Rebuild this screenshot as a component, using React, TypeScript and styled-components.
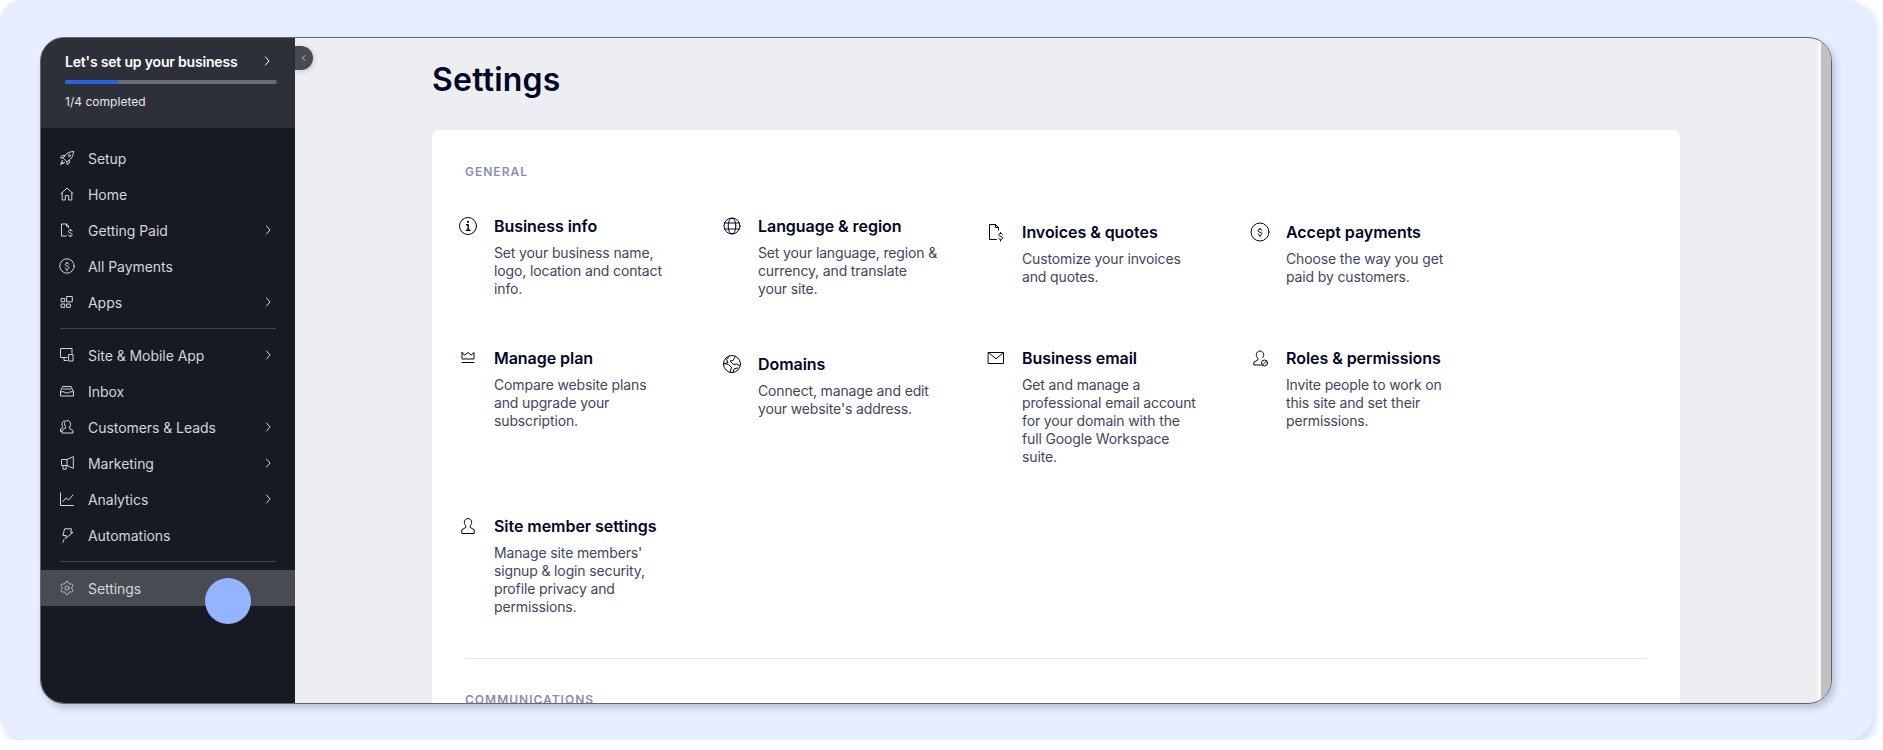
import React from "react";
import styled, { createGlobalStyle } from "styled-components";
import { Settings as Gear } from "lucide-react";

const Global = createGlobalStyle`
  html, body { margin: 0; padding: 0; background: #fff; overflow: hidden; }
  body { font-family: "Inter", "Liberation Sans", sans-serif; }
  * { box-sizing: border-box; }
`;

const Backdrop = styled.div`
  width: 1873px;
  height: 740px;
  padding: 37px 0 0 40px;
  background: #e7eeff;
  border-radius: 22px 26px 26px 26px;
  box-shadow: 3px 4px 8px #cfdcff;
`;

const Window = styled.div`
  position: relative;
  display: flex;
  width: 1792px;
  height: 667px;
  overflow: hidden;
  background: #edeef2;
  border: 1px solid #66676b;
  border-radius: 24px;
`;

const WindowShadow = styled.div`
  width: 1792px;
  height: 667px;
  border-radius: 24px;
  box-shadow: 3px 4px 7px rgba(40, 50, 80, 0.24);
`;

const Sidebar = styled.aside`
  flex: 0 0 254px;
  display: flex;
  flex-direction: column;
  background: #161a23;
  color: #d4d5d9;
`;

const SetupCard = styled.div`
  height: 90px;
  padding: 13px 18px 0 24px;
  background: #2d3038;
`;

const SetupTop = styled.div`
  display: flex;
  align-items: center;
  justify-content: space-between;
  height: 20px;
  padding-right: 5px;
  color: #fff;
  font-size: 14px;
  font-weight: 600;
  letter-spacing: -0.18px;
`;

const Track = styled.div`
  height: 4px;
  margin-top: 9px;
  border-radius: 2px;
  background: #6b6c72;
  overflow: hidden;
`;

const Fill = styled.div`
  width: 25%;
  height: 100%;
  background: #2a63e0;
`;

const Progress = styled.div`
  margin-top: 10px;
  color: #e6e7ea;
  font-size: 12px;
  line-height: 16px;
  letter-spacing: 0.03px;
`;

const Nav = styled.nav`
  display: flex;
  flex-direction: column;
  padding-top: 12px;
`;

const NavRow = styled.div<{ $active?: boolean }>`
  display: flex;
  align-items: center;
  height: 36px;
  padding: 0 22px 0 16px;
  background: ${(p) => (p.$active ? "#484b52" : "transparent")};
  font-size: 14px;
  letter-spacing: -0.05px;
`;

const NavIcon = styled.span`
  display: flex;
  align-items: center;
  justify-content: center;
  width: 20px;
  height: 20px;
  margin-right: 11px;
`;

const NavLabel = styled.span`
  flex: 1;
`;

const NavDivider = styled.div`
  height: 1px;
  margin: 8px 19px;
  background: #43454c;
`;

const Tap = styled.div`
  position: absolute;
  left: 164px;
  top: 540px;
  width: 46px;
  height: 46px;
  border-radius: 50%;
  background: #94b4ff;
`;

const Collapse = styled.div`
  position: absolute;
  left: 254px;
  top: 8px;
  display: flex;
  align-items: center;
  justify-content: center;
  width: 18px;
  height: 24px;
  border-radius: 0 12px 12px 0;
  background: #474a52;
  color: #c4c5ca;
  box-shadow: 1px 1px 5px rgba(0, 0, 0, 0.18);
`;

const Main = styled.main`
  flex: 1;
  min-width: 0;
  height: 100%;
  overflow: hidden;
  padding: 22px 137px 0 137px;
`;

const Title = styled.h1`
  margin: 0 0 30px;
  height: 40px;
  color: #000624;
  font-size: 32px;
  line-height: 40px;
  font-weight: 600;
  letter-spacing: 0.2px;
`;

const Card = styled.section`
  height: 700px;
  padding: 34px 33px 0 24px;
  background: #fff;
  border-radius: 8px;
`;

const SectionLabel = styled.div`
  margin-left: 9px;
  color: #8b8ea9;
  font-size: 12px;
  line-height: 16px;
  font-weight: 600;
  letter-spacing: 1px;
`;

const Grid = styled.div`
  display: grid;
  grid-template-columns: repeat(4, 264px);
  row-gap: 48px;
  margin-top: 34px;
`;

const Item = styled.div<{ $drop?: boolean }>`
  display: flex;
  gap: 14px;
  padding-top: ${(p) => (p.$drop ? "6px" : "0")};
`;

const ItemIcon = styled.span`
  flex: 0 0 24px;
  height: 24px;
  display: flex;
  align-items: center;
  justify-content: center;
  color: #000624;
`;

const ItemTitle = styled.div`
  color: #000624;
  font-size: 16px;
  line-height: 24px;
  font-weight: 600;
  letter-spacing: -0.05px;
`;

const ItemText = styled.div`
  margin-top: 6px;
  color: #42465c;
  font-size: 14px;
  line-height: 18px;
  letter-spacing: -0.14px;
  white-space: nowrap;
`;

const Divider = styled.div`
  height: 1px;
  margin: 42px 0 0 9px;
  background: #dfe5eb;
`;

const NextLabel = styled(SectionLabel)`
  margin-top: 33px;
`;

const Scrollbar = styled.div`
  flex: 0 0 14px;
  height: 100%;
  border-left: 4px solid #f7f7f7;
  background: #c1c1c1;
`;

const Svg = styled.svg`
  display: block;
  fill: none;
  stroke: currentColor;
  stroke-width: 1;
  stroke-linecap: round;
  stroke-linejoin: round;
`;

const dollar = (x: number, y: number, s = 1) =>
  `M${x + 1.9 * s} ${y - 1.6 * s}c-.4-.8-1-1.1-1.9-1.1-1 0-1.8.6-1.8 1.5 0 2.1 3.8 1 3.8 3.1 0 .9-.8 1.5-2 1.5-.9 0-1.6-.4-2-1.1M${x} ${y - 3.6 * s}v1M${x} ${y + 4 * s}v1.1`;

const nav: Record<string, React.ReactNode> = {
  rocket: (
    <>
      <path d="M16.5 3.5c-3.6.1-6.2 1.3-8.3 3.8L6.2 10l3.8 3.8 2.7-2c2.5-2.1 3.7-4.7 3.8-8.3z" />
      <path d="M7.8 7.6H5L3.5 10l2.7.1M12.4 12.2V15L10 16.5l-.1-2.7" />
      <circle cx="12.4" cy="7.6" r="1.1" />
      <path d="M5.6 12.4 3.5 16.5l4.1-2.1M4.6 13.8l1.6 1.6" />
    </>
  ),
  home: <path d="M4 9.6 10 4l6 5.6M5.2 8.6V16h3.1v-4.4h3.4V16h3.1V8.6" />,
  file: (
    <>
      <path d="M11.5 8V6.2L9.5 4H4.5v12h4.8M9.5 4v2.2h2" />
      <path d={dollar(13.6, 12.4, 0.8)} />
    </>
  ),
  coin: (
    <>
      <circle cx="10" cy="10" r="7.2" />
      <path d={dollar(10, 9.8)} />
    </>
  ),
  apps: (
    <>
      <rect x="4.5" y="6.5" width="3.3" height="3.3" />
      <rect x="10" y="4.5" width="5.3" height="5.3" />
      <rect x="4.5" y="12" width="3.3" height="3.3" />
      <rect x="10" y="12" width="3.3" height="3.3" />
    </>
  ),
  site: (
    <>
      <path d="M10 12.5H3.5v-9h11.5v4.5M7 12.5v3h3" />
      <rect x="12" y="9.5" width="4" height="6.5" />
    </>
  ),
  inbox: (
    <>
      <path d="M6 5.5h8l2.5 5v4.500h-13v-4.500z" />
      <path d="M3.5 10.800H7c.6 1.600 5.400 1.600 6 0h3.500M6 8h8" />
    </>
  ),
  people: (
    <>
      <path d="M10.500 3.500c-2 0-3.100 1.500-3 3.200 0 1.400.5 2.400 1.200 3v1.300L5 13.200v2.800h11v-2.500l-3.500-2v-1.400c.7-.7 1.100-1.700 1.100-3 0-1.500-1.100-3.600-3.100-3.600z" />
      <path d="M7.500 3.800C5 4 4.400 7.500 5.700 9.700v1L3.500 12v2.500H5" />
    </>
  ),
  megaphone: (
    <>
      <path d="M16 3.800 10 6.500H4.500v6H10l6 2.700z" />
      <path d="M6 12.500v3.700h3.200v-3.700M10 6.500v6" />
    </>
  ),
  chart: <path d="M3.500 3.800V16.500H16.500M5.800 12.800 9 8.800l2.500 2.200 4.500-5" />,
  bolt: <path d="M8 3.800h6.500l-.9 3.500h2.400L8.500 13.500l.8-3H6.300zM7 14.500l-1 2.800" />,
};

const big: Record<string, React.ReactNode> = {
  info: (
    <>
      <circle cx="12" cy="12" r="8.500" />
      <path strokeWidth="1.500" d="M10.500 10.800H12.200V16M10.300 16.200H14" />
      <path strokeWidth="2" d="M12 7.700v.3" />
    </>
  ),
  globe: (
    <>
      <circle cx="12" cy="12" r="8" />
      <ellipse cx="12" cy="12" rx="3.800" ry="8" />
      <path d="M4.700 9h14.600M4.700 15h14.600" />
    </>
  ),
  file: (
    <>
      <path d="M14.500 10V7.500L11.500 4.500H5.500v15h7M11.500 4.500v3h3" />
      <path d={dollar(16.500, 16, 1)} />
    </>
  ),
  coin: (
    <>
      <circle cx="12" cy="12" r="9" />
      <path d={dollar(12, 11.800, 0.95)} />
    </>
  ),
  crown: (
    <>
      <path d="M6 6.500v6.500h12V6.500l-2.800 2.500L12 6.500 8.800 9z" />
      <path d="M6 16.500h12" />
    </>
  ),
  earth: (
    <>
      <circle cx="12" cy="12" r="8.500" />
      <path d="M9 4.500 6.500 7.500l1.500 3-3 1M4 11.500l4.500 1 3 3-1.500 5M15.500 4.300 13 8.500l-3 .5 3.500 3.500 3-.5 3 1.500M13 20.300l1-3.300 3.500-1" />
    </>
  ),
  mail: (
    <>
      <rect x="4.500" y="6.500" width="15" height="11" />
      <path d="m4.800 6.800 7.200 6 7.200-6" />
    </>
  ),
  roles: (
    <>
      <path d="M13 19H5.800v-2.800l4-2.200v-1.700c-1-1-1.500-2.100-1.500-3.500 0-2 1.500-3.800 3.700-3.800s3.700 1.800 3.700 3.800c0 1-.3 2-1 2.800" />
      <circle cx="16.500" cy="17" r="3" />
      <path d="m14.500 19 4-4" />
    </>
  ),
  member: (
    <path d="M12 4.500c-2.200 0-3.700 1.700-3.700 3.800 0 1.400.6 2.600 1.500 3.500v1.600l-4 2.400v3.700h12.400v-3.700l-4-2.400v-1.600c.9-.9 1.500-2.100 1.500-3.500 0-2.100-1.500-3.800-3.700-3.800z" />
  ),
};

const Chevron = ({ size = 10 }: { size?: number }) => (
  <Svg width={size} height={size} viewBox="0 0 10 10">
    <path d="m3.500 1 3.500 4-3.500 4" />
  </Svg>
);

const Back = () => (
  <Svg width="8" height="8" viewBox="0 0 8 8" strokeWidth="1.500">
    <path d="M5 1.500 2.500 4 5 6.500" />
  </Svg>
);

type NavEntry = { icon: string; label: string; more?: boolean };

const groupA: NavEntry[] = [
  { icon: "rocket", label: "Setup" },
  { icon: "home", label: "Home" },
  { icon: "file", label: "Getting Paid", more: true },
  { icon: "coin", label: "All Payments" },
  { icon: "apps", label: "Apps", more: true },
];
const groupB: NavEntry[] = [
  { icon: "site", label: "Site & Mobile App", more: true },
  { icon: "inbox", label: "Inbox" },
  { icon: "people", label: "Customers & Leads", more: true },
  { icon: "megaphone", label: "Marketing", more: true },
  { icon: "chart", label: "Analytics", more: true },
  { icon: "bolt", label: "Automations" },
];

const items = [
  { icon: "info", title: "Business info", lines: ["Set your business name,", "logo, location and contact", "info."] },
  { icon: "globe", title: "Language & region", lines: ["Set your language, region &", "currency, and translate", "your site."] },
  { icon: "file", title: "Invoices & quotes", lines: ["Customize your invoices", "and quotes."], drop: true },
  { icon: "coin", title: "Accept payments", lines: ["Choose the way you get", "paid by customers."], drop: true },
  { icon: "crown", title: "Manage plan", lines: ["Compare website plans", "and upgrade your", "subscription."] },
  { icon: "earth", title: "Domains", lines: ["Connect, manage and edit", "your website's address."], drop: true },
  { icon: "mail", title: "Business email", lines: ["Get and manage a", "professional email account", "for your domain with the", "full Google Workspace", "suite."] },
  { icon: "roles", title: "Roles & permissions", lines: ["Invite people to work on", "this site and set their", "permissions."] },
  { icon: "member", title: "Site member settings", lines: ["Manage site members'", "signup & login security,", "profile privacy and", "permissions."] },
];

const NavItem = ({ icon, label, more }: NavEntry) => (
  <NavRow>
    <NavIcon>
      <Svg width="20" height="20" viewBox="0 0 20 20">{nav[icon]}</Svg>
    </NavIcon>
    <NavLabel>{label}</NavLabel>
    {more && <Chevron />}
  </NavRow>
);

export default function App() {
  return (
    <>
      <Global />
      <Backdrop>
        <WindowShadow>
          <Window>
            <Sidebar>
              <SetupCard>
                <SetupTop>
                  <span>Let's set up your business</span>
                  <Chevron />
                </SetupTop>
                <Track>
                  <Fill />
                </Track>
                <Progress>1/4 completed</Progress>
              </SetupCard>
              <Nav>
                {groupA.map((n) => (
                  <NavItem key={n.label} {...n} />
                ))}
                <NavDivider />
                {groupB.map((n) => (
                  <NavItem key={n.label} {...n} />
                ))}
                <NavDivider />
                <NavRow $active>
                  <NavIcon>
                    <Gear size={16} strokeWidth={1.2} />
                  </NavIcon>
                  <NavLabel>Settings</NavLabel>
                </NavRow>
              </Nav>
            </Sidebar>
            <Main>
              <Title>Settings</Title>
              <Card>
                <SectionLabel>GENERAL</SectionLabel>
                <Grid>
                  {items.map((it) => (
                    <Item key={it.title} $drop={it.drop}>
                      <ItemIcon>
                        <Svg width="24" height="24" viewBox="0 0 24 24">{big[it.icon]}</Svg>
                      </ItemIcon>
                      <div>
                        <ItemTitle>{it.title}</ItemTitle>
                        <ItemText>
                          {it.lines.map((l) => (
                            <div key={l}>{l}</div>
                          ))}
                        </ItemText>
                      </div>
                    </Item>
                  ))}
                </Grid>
                <Divider />
                <NextLabel>COMMUNICATIONS</NextLabel>
              </Card>
            </Main>
            <Scrollbar />
            <Collapse>
              <Back />
            </Collapse>
            <Tap />
          </Window>
        </WindowShadow>
      </Backdrop>
    </>
  );
}
